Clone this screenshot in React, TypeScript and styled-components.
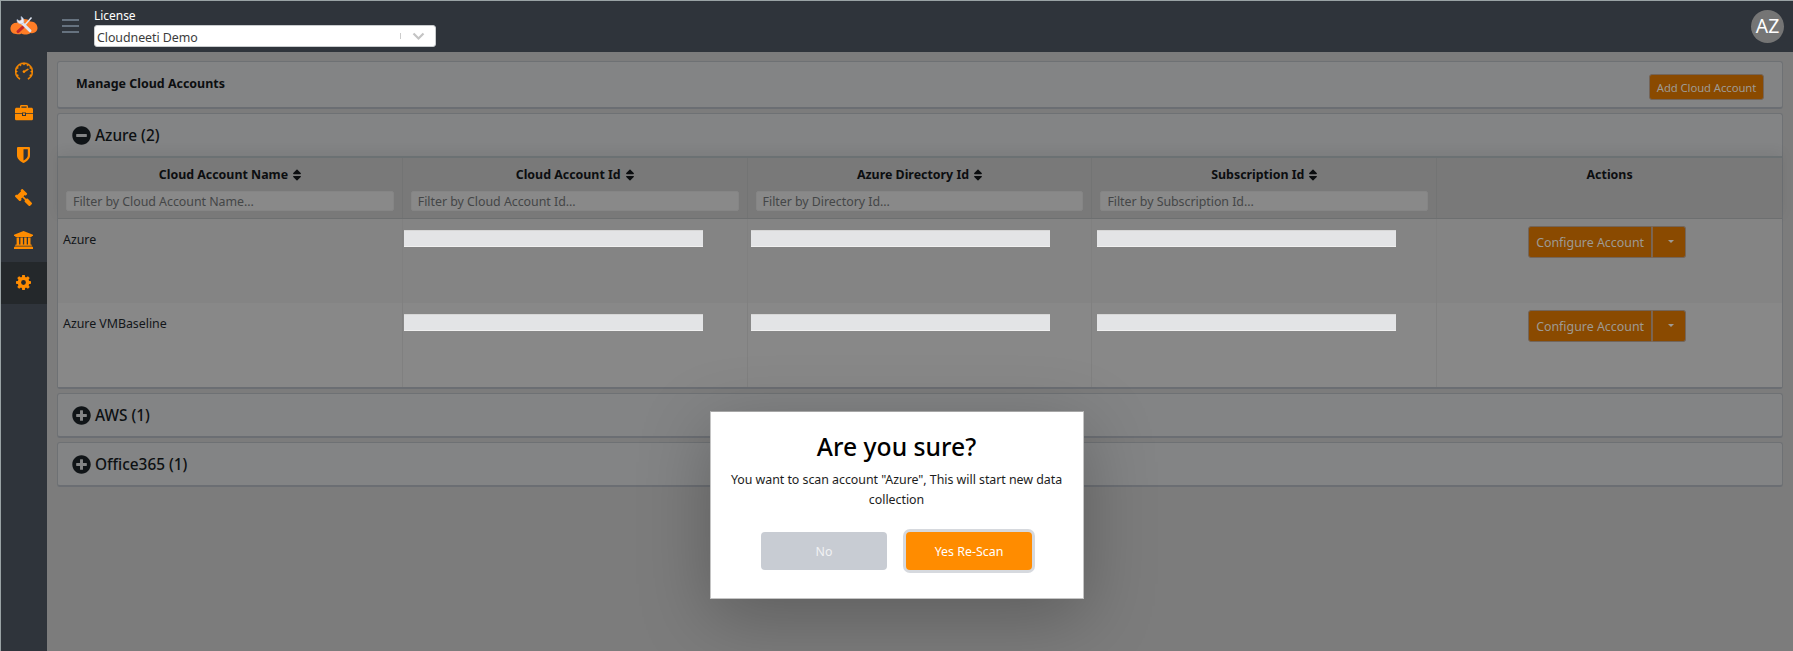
import React from "react";
import styled, { createGlobalStyle } from "styled-components";
import { SlSpeedometer } from "react-icons/sl";
import { FaGavel, FaSort, FaMinusCircle, FaPlusCircle } from "react-icons/fa";

const GlobalStyle = createGlobalStyle`
  *, *::before, *::after { box-sizing: border-box; }
  body {
    margin: 0;
    background: #7c7c7c;
    color: #121619;
    font-family: "Noto Sans", "Open Sans", sans-serif;
    font-size: 12.4px;
    line-height: 20px;
    overflow: hidden;
  }
`;

const Shell = styled.div`
  display: flex;
  height: 651px;
  border-top: 1px solid #9aa3a5;
  border-left: 1px solid #9aa3a5;
`;

const Sidebar = styled.nav`
  width: 46px;
  flex: none;
  background: #2f343b;
  color: #ff8c00;
`;

const Brand = styled.div`
  height: 50px;
  display: flex;
  align-items: center;
  justify-content: center;
`;

const NavItem = styled.a<{ $active?: boolean }>`
  height: 42.2px;
  display: flex;
  align-items: center;
  justify-content: center;
  padding: 0 1px 2px 0;
  background: ${(p) => (p.$active ? "#24282b" : "transparent")};
  svg { display: block; }
`;

const Main = styled.div`
  flex: 1;
  min-width: 0;
  display: flex;
  flex-direction: column;
`;

const Header = styled.header`
  height: 51px;
  flex: none;
  background: #2f343b;
  display: flex;
  align-items: flex-start;
  padding: 5px 9px 0 15px;
`;

const MenuButton = styled.div`
  width: 17px;
  height: 14px;
  margin: 13px 15px 0 0;
  display: flex;
  flex-direction: column;
  justify-content: space-between;
  span { height: 2px; background: #66727f; }
`;

const License = styled.div`
  width: 342px;
  color: #fff;
  font-size: 12px;
  letter-spacing: -0.04px;
  line-height: 20px;
`;

const Select = styled.div`
  height: 22px;
  margin-top: -1px;
  padding: 0 10px 0 2px;
  display: flex;
  align-items: center;
  background: #fff;
  color: #3c3c3c;
  border: 1px solid #c9ccce;
  border-radius: 3px;
  font-size: 12.4px;
`;

const SelectValue = styled.span`
  flex: 1;
  padding-top: 3px;
  letter-spacing: -0.05px;
`;

const SelectDivider = styled.span`
  width: 1px;
  height: 6px;
  margin-right: 11px;
  background: #ccc;
`;

const Avatar = styled.div`
  width: 33px;
  height: 33px;
  margin: 4px 0 0 auto;
  border-radius: 50%;
  background: #757575;
  color: #fff;
  font-size: 19.4px;
  line-height: 32px;
  text-align: center;
`;

const Content = styled.main`
  flex: 1;
  padding: 9px 10px 0;
  background: #7c7c7c;
  display: flex;
  flex-direction: column;
  gap: 4px;
`;

const Card = styled.section`
  border: 1px solid #6e7174;
  border-bottom: 2px solid #6b6e73;
  border-radius: 3px;
  background: #838485;
`;

const TitleBar = styled.div`
  height: 45px;
  display: flex;
  justify-content: space-between;
  padding: 12px 18px 0;
`;

const Title = styled.h1`
  margin: 0;
  font-size: 12.45px;
  line-height: 20px;
  font-weight: 700;
  color: #0c0e10;
`;

const ActionButton = styled.button`
  font-family: inherit;
  color: #9e9a94;
  background: #8a4a00;
  border: 1px solid #73655a;
  padding: 0;
`;

const AddButton = styled(ActionButton)`
  width: 115px;
  height: 26px;
  border-radius: 3px;
  font-size: 11.3px;
  letter-spacing: -0.08px;
`;

const GroupHeader = styled.div`
  height: 42px;
  display: flex;
  align-items: center;
  gap: 4px;
  padding-left: 14px;
  font-size: 15.4px;
  font-weight: 500;
  color: #0d1012;
  svg { flex: none; color: #101417; }
  span { padding-top: 1px; }
`;

const Columns = styled.div`
  display: grid;
  grid-template-columns: repeat(5, 1fr);
`;

const TableHead = styled(Columns)`
  height: 63px;
  background: #797979;
  border-top: 2px solid #6b7173;
  border-bottom: 1px solid #6d6f70;
  box-shadow: 0 -4px 12px rgba(0, 0, 0, 0.06);
`;

const HeadCell = styled.div`
  padding: 7px 8px 0;
  border-right: 1px solid #737474;
  display: flex;
  flex-direction: column;
  gap: 6px;
  &:last-child { border-right: 0; }
`;

const HeadLabel = styled.div`
  height: 20px;
  display: flex;
  align-items: center;
  justify-content: center;
  gap: 2px;
  color: #0c0e10;
  font-weight: 700;
  svg { margin-right: -3px; }
`;

const Filter = styled.input`
  width: 100%;
  height: 20px;
  padding: 0 6px;
  border: 1px solid #858585;
  border-radius: 2px;
  background: #898989;
  font-family: inherit;
  font-size: 12.4px;
  letter-spacing: -0.03px;
  &::placeholder { color: #444647; opacity: 1; }
`;

const TableRow = styled(Columns)<{ $odd?: boolean }>`
  height: 84px;
  background: ${(p) => (p.$odd ? "#848484" : "#888888")};
`;

const Cell = styled.div`
  padding: 11px 5px 0;
  border-right: 1px solid #808080;
  letter-spacing: -0.03px;
  &:last-child { border-right: 0; }
`;

const RedactedCell = styled(Cell)<{ $inset: number }>`
  padding: 11px 0 0 ${(p) => p.$inset}px;
`;

const Redacted = styled.div`
  width: 299px;
  height: 17px;
  background: #e3e4e6;
  border-bottom: 1px solid #f0f0f0;
  border-top: 1px solid #d6d6d6;
`;

const ActionCell = styled(Cell)`
  display: flex;
  justify-content: center;
  align-items: flex-start;
  padding: 7px 10px 0 5px;
`;

const ConfigureButton = styled(ActionButton)`
  width: 124px;
  height: 32px;
  border-radius: 3px 0 0 3px;
  font-size: 12.4px;
  padding-top: 1px;
`;

const MenuToggle = styled(ActionButton)`
  width: 34px;
  height: 32px;
  border-left-color: #82654a;
  border-radius: 0 3px 3px 0;
  display: flex;
  align-items: center;
  justify-content: center;
`;

const Caret = styled.span`
  margin: -2px 0 0 3px;
  border: 3.5px solid transparent;
  border-top-color: #9e9a94;
  border-bottom: 0;
`;

const Dialog = styled.div`
  position: absolute;
  left: 710px;
  top: 411px;
  width: 374px;
  height: 188px;
  padding: 17px 19px 0 18px;
  background: #fff;
  border: 1px solid #c4c4c4;
  border-top-color: #a6a6a6;
  box-shadow: 0 18px 70px rgba(0, 0, 0, 0.25);
  text-align: center;
  color: #1c1c1c;
`;

const DialogTitle = styled.h2`
  margin: 0 0 5px;
  font-size: 24.7px;
  line-height: 36px;
  font-weight: 500;
  color: #000;
`;

const DialogText = styled.p`
  margin: 0;
  line-height: 19.5px;
  letter-spacing: -0.03px;
`;

const DialogActions = styled.div`
  margin-top: 23px;
  display: flex;
  justify-content: center;
  gap: 19px;
`;

const DialogButton = styled.button<{ $primary?: boolean }>`
  width: 126px;
  height: 38px;
  padding: 1px 0 0;
  border: 0;
  border-radius: 4px;
  font-family: inherit;
  font-size: 12.4px;
  background: ${(p) => (p.$primary ? "#ff8c00" : "#c8ccd3")};
  color: ${(p) => (p.$primary ? "#fff" : "#f1f2f4")};
  box-shadow: ${(p) => (p.$primary ? "0 0 0 3px #d6d9de" : "none")};
`;

const LogoIcon = () => (
  <svg width="28" height="20" viewBox="0 0 28 20">
    <path d="M6 18 C2 18 0 15 .5 11.5 C1 8 4 6.5 7 6.8 C9 2.5 17 1.5 20 5.5 C24 5 27.5 8 27.5 12 C27.5 15.5 24 18 20.5 17 C17 19.5 13 18.5 11.5 17.5 C10 18.5 8 18.5 6 18Z" fill="#ff7d26" />
    <path d="M21.5 1.5 L14 10" stroke="#dfe5f2" strokeWidth="1.5" />
    <path d="M13.2 10.8 L8 15.6" stroke="#c2282c" strokeWidth="3" strokeLinecap="round" />
    <path d="M11 6 L20 14.8" stroke="#dfe5f2" strokeWidth="3" strokeLinecap="round" />
    <path d="M7 3.5 C6.500 6 9 8.400 12 7.800 C15 7 14.500 2 11 .500 L11.500 3.800 L9.600 5 Z" fill="#e8edf8" stroke="#aebbd6" strokeWidth=".6" />
  </svg>
);

const BriefcaseIcon = () => (
  <svg width="18" height="16" viewBox="0 0 18 16" fill="currentColor">
    <path fillRule="evenodd" d="M5 2.8V1.4C5 .6 5.6 0 6.4 0h5.2c.8 0 1.4.6 1.4 1.4v1.4h3.4c.9 0 1.6.7 1.6 1.5v3.9h-7V7.4H7v.8H0V4.3c0-.8.7-1.5 1.6-1.5H5Zm1.4 0h5.2V1.4H6.4v1.400ZM0 9h7v1.900h4V9h7v4.900c0 .7-.7 1.300-1.600 1.300H1.600C.7 15.200 0 14.600 0 13.900V9Z" />
    <path d="M8 8.200h2v1.700H8Z" />
  </svg>
);

const ShieldIcon = () => (
  <svg width="13" height="16" viewBox="0 0 13 16">
    <path fill="currentColor" fillRule="evenodd" d="M1 0h11q1 0 1 1v7.500c0 3.500-3.500 6.200-6.500 7.500C3.500 14.700 0 12 0 8.500V1q0-1 1-1Zm5.500 2.200v11.300c2.400-1.300 4.300-3 4.300-5V2.200Z" />
  </svg>
);

const BankIcon = () => (
  <svg width="19" height="18" viewBox="0 0 19 18" fill="currentColor">
    <path d="M9.500 0 19 3.700V5h-1.300v1H1.300V5H0V3.700ZM2.600 6.500h2.500v7h1.300v-7h2.500v7h1.300v-7h2.500v7H14v-7h2.500v7h.6q.7 0 .7.800v.5H1.200v-.5q0-.8.7-.8h.7ZM1 15.500h17l1 .8V18H0v-1.700Z" />
  </svg>
);

const GearIcon = () => (
  <svg width="15" height="15" viewBox="0 0 15 15">
    <circle cx="7.500" cy="7.500" r="4.100" fill="none" stroke="currentColor" strokeWidth="3.400" />
    {[0, 45, 90, 135, 180, 225, 270, 315].map((angle) => (
      <path key={angle} d="M6.200 0h2.600l.5 3H5.700Z" fill="currentColor" transform={`rotate(${angle} 7.5 7.5)`} />
    ))}
  </svg>
);

const ChevronIcon = () => (
  <svg width="13" height="9" viewBox="0 0 13 9" fill="none">
    <path d="M1.500 1.500 6.500 6.500 11.500 1.500" stroke="#c4c4c4" strokeWidth="2.200" />
  </svg>
);

const MirroredGavel = styled(FaGavel)`
  transform: scaleX(-1);
`;

const columns = [
  { label: "Cloud Account Name", filter: "Filter by Cloud Account Name..." },
  { label: "Cloud Account Id", filter: "Filter by Cloud Account Id..." },
  { label: "Azure Directory Id", filter: "Filter by Directory Id..." },
  { label: "Subscription Id", filter: "Filter by Subscription Id..." },
];

const accounts = ["Azure", "Azure VMBaseline"];
const redactedInsets = [1, 3.5, 4.5];

export default function App() {
  return (
    <>
      <GlobalStyle />
      <Shell>
        <Sidebar>
          <Brand><LogoIcon /></Brand>
          <NavItem><SlSpeedometer size={18} strokeWidth={30} stroke="currentColor" /></NavItem>
          <NavItem><BriefcaseIcon /></NavItem>
          <NavItem><ShieldIcon /></NavItem>
          <NavItem><MirroredGavel size={17} /></NavItem>
          <NavItem><BankIcon /></NavItem>
          <NavItem $active><GearIcon /></NavItem>
        </Sidebar>
        <Main>
          <Header>
            <MenuButton><span /><span /><span /></MenuButton>
            <License>
              License
              <Select>
                <SelectValue>Cloudneeti Demo</SelectValue>
                <SelectDivider />
                <ChevronIcon />
              </Select>
            </License>
            <Avatar>AZ</Avatar>
          </Header>
          <Content>
            <Card>
              <TitleBar>
                <Title>Manage Cloud Accounts</Title>
                <AddButton>Add Cloud Account</AddButton>
              </TitleBar>
            </Card>
            <Card>
              <GroupHeader><FaMinusCircle size={19} /><span>Azure (2)</span></GroupHeader>
              <TableHead>
                {columns.map((c) => (
                  <HeadCell key={c.label}>
                    <HeadLabel>{c.label}<FaSort size={14} /></HeadLabel>
                    <Filter placeholder={c.filter} />
                  </HeadCell>
                ))}
                <HeadCell><HeadLabel>Actions</HeadLabel></HeadCell>
              </TableHead>
              {accounts.map((name, i) => (
                <TableRow key={name} $odd={i % 2 === 0}>
                  <Cell>{name}</Cell>
                  {redactedInsets.map((inset) => (
                    <RedactedCell key={inset} $inset={inset}><Redacted /></RedactedCell>
                  ))}
                  <ActionCell>
                    <ConfigureButton>Configure Account</ConfigureButton>
                    <MenuToggle><Caret /></MenuToggle>
                  </ActionCell>
                </TableRow>
              ))}
            </Card>
            <Card><GroupHeader><FaPlusCircle size={19} /><span>AWS (1)</span></GroupHeader></Card>
            <Card><GroupHeader><FaPlusCircle size={19} /><span>Office365 (1)</span></GroupHeader></Card>
          </Content>
        </Main>
      </Shell>
      <Dialog>
        <DialogTitle>Are you sure?</DialogTitle>
        <DialogText>You want to scan account "Azure", This will start new data collection</DialogText>
        <DialogActions>
          <DialogButton>No</DialogButton>
          <DialogButton $primary>Yes Re-Scan</DialogButton>
        </DialogActions>
      </Dialog>
    </>
  );
}
